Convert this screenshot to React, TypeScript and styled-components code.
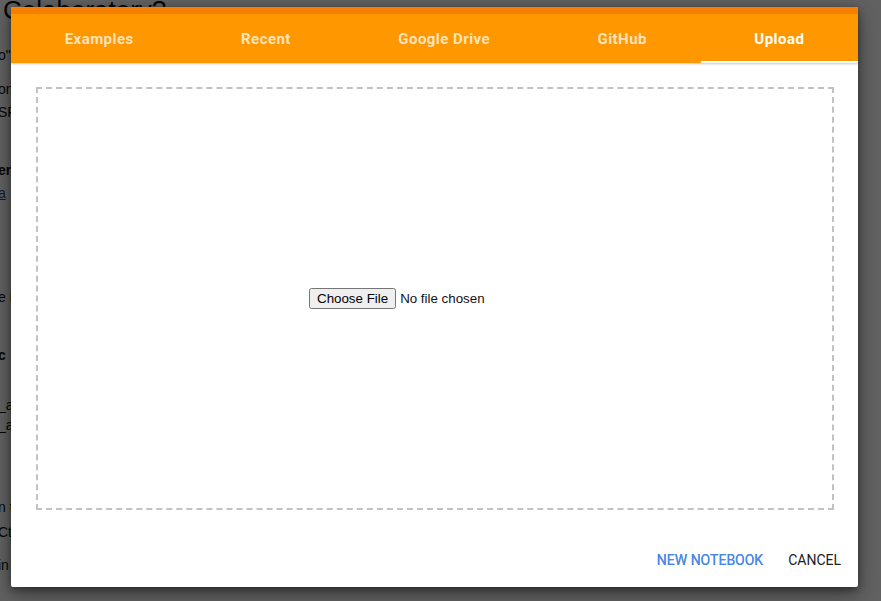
import React from "react";
import styled, { createGlobalStyle } from "styled-components";

const Global = createGlobalStyle`
  html, body { margin: 0; padding: 0; width: 881px; height: 601px; overflow: hidden; background: #fff; }
  * { box-sizing: border-box; }
`;

const Page = styled.div`
  position: relative;
  width: 881px;
  height: 601px;
  overflow: hidden;
  font-family: "Liberation Sans", Arial, sans-serif;
  color: #111;
`;

const Heading = styled.h1`
  margin: -5px 0 0 3px;
  font-size: 26px;
  font-weight: 400;
  line-height: 30px;
`;

const BgLine = styled.div<{ $gap: number; $bold?: boolean; $link?: boolean }>`
  margin-top: ${(p) => p.$gap}px;
  margin-left: -2px;
  font-size: 14px;
  line-height: 16px;
  height: 16px;
  white-space: nowrap;
  font-weight: ${(p) => (p.$bold ? 700 : 400)};
  color: ${(p) => (p.$link ? "#1a4f8a" : "#111")};
  text-decoration: ${(p) => (p.$link ? "underline" : "none")};
`;

const Scrim = styled.div`
  position: absolute;
  inset: 0;
  background: rgba(0, 0, 0, 0.62);
`;

const Dialog = styled.div`
  position: absolute;
  left: 11px;
  top: 7px;
  width: 847px;
  height: 580px;
  background: #fff;
  border-radius: 2px;
  box-shadow: 0 6px 18px rgba(0, 0, 0, 0.45), 0 2px 6px rgba(0, 0, 0, 0.3);
  display: flex;
  flex-direction: column;
  overflow: hidden;
`;

const Header = styled.div`
  border-top: 7px solid #f57f00;
  background: #ff9800;
  box-shadow: 0 1px 2px rgba(0, 0, 0, 0.22);
  position: relative;
  z-index: 1;
`;

const TabBar = styled.div`
  display: flex;
  height: 49px;
`;

const Tab = styled.div<{ $active?: boolean }>`
  flex: 1 1 auto;
  display: flex;
  align-items: center;
  justify-content: center;
  padding: 3px 16px 0;
  font-family: Roboto, "Liberation Sans", Arial, sans-serif;
  font-weight: 700;
  font-size: 15px;
  letter-spacing: 0.45px;
  color: ${(p) => (p.$active ? "#ffffff" : "rgba(255,255,255,0.74)")};
  border-bottom: 2px solid ${(p) => (p.$active ? "#ffffff" : "transparent")};
`;

const Body = styled.div`
  padding: 24px 24px 0 25px;
`;

const DropZone = styled.div`
  height: 423px;
  border: 2px dashed #c2c2c2;
  display: flex;
  align-items: center;
  justify-content: center;
`;

const FileInput = styled.input`
  font: 13.333px "Liberation Sans", Arial, sans-serif;
  color: #111;
  margin-left: 1px;
  margin-top: -1px;
`;

const Footer = styled.div`
  margin-top: auto;
  display: flex;
  justify-content: flex-end;
  gap: 9px;
  padding: 0 9px 9px 0;
`;

const Button = styled.button<{ $primary?: boolean }>`
  height: 36px;
  min-width: 64px;
  padding: 0 8px;
  border: none;
  background: transparent;
  font-family: Roboto, "Liberation Sans", Arial, sans-serif;
  font-weight: 400;
  font-size: 14px;
  letter-spacing: 0;
  text-transform: uppercase;
  color: ${(p) => (p.$primary ? "#4a88e8" : "#212121")};
  text-shadow: ${(p) => (p.$primary ? "0 0 0.3px #4a88e8" : "none")};
  cursor: pointer;
`;

const bgLines: { text: string; gap: number; bold?: boolean; link?: boolean }[] = [
  { text: 'o" ', gap: 22 },
  { text: "on", gap: 18 },
  { text: "SP", gap: 7 },
  { text: "er", gap: 42, bold: true },
  { text: "a", gap: 7, link: true },
  { text: "e r", gap: 88 },
  { text: "c", gap: 42, bold: true },
  { text: "_a", gap: 34 },
  { text: "_a", gap: 4 },
  { text: "n t", gap: 66 },
  { text: "Ct", gap: 9 },
  { text: "in", gap: 17 },
];

export default function App() {
  const tabs = ["Examples", "Recent", "Google Drive", "GitHub", "Upload"];
  return (
    <Page>
      <Global />
      <Heading>Colaboratory?</Heading>
      {bgLines.map((l, i) => (
        <BgLine key={i} $gap={l.gap} $bold={l.bold} $link={l.link}>
          {l.text}
        </BgLine>
      ))}
      <Scrim />
      <Dialog>
        <Header>
          <TabBar>
            {tabs.map((t) => (
              <Tab key={t} $active={t === "Upload"}>
                {t}
              </Tab>
            ))}
          </TabBar>
        </Header>
        <Body>
          <DropZone>
            <FileInput type="file" />
          </DropZone>
        </Body>
        <Footer>
          <Button $primary>New notebook</Button>
          <Button>Cancel</Button>
        </Footer>
      </Dialog>
    </Page>
  );
}
